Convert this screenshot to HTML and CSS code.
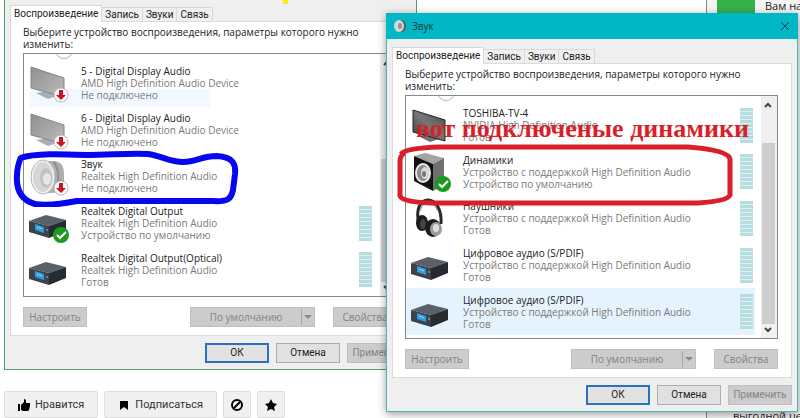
FILE: index.html
```
<!DOCTYPE html>
<html lang="ru">
<head>
    <meta charset="UTF-8">
    <meta name="viewport" content="width=device-width, initial-scale=1.0">
    <title>Звук</title>
    <link rel="stylesheet" href="styles.css">
</head>
<body>
    <!-- Иконки устройств -->
    <svg class="sprite" width="0" height="0" aria-hidden="true">
        <defs>
            <linearGradient id="screen-off" x1="0" y1="0" x2="1" y2="1">
                <stop offset="0" stop-color="#8f8f8f"/>
                <stop offset="1" stop-color="#bcbcbc"/>
            </linearGradient>
            <linearGradient id="screen-on" x1="0" y1="1" x2="1" y2="0">
                <stop offset="0" stop-color="#3c3c3c"/>
                <stop offset="0.5" stop-color="#767676"/>
                <stop offset="1" stop-color="#4c4c4c"/>
            </linearGradient>
        </defs>
        <symbol id="tv-off" viewBox="0 0 40 40">
            <path d="M7 30l13-2 8 5-9 3z" fill="#a9b0b5"/>
            <path d="M2 4l33 11v19L2 25z" fill="url(#screen-off)" stroke="#858585"/>
        </symbol>
        <symbol id="tv-on" viewBox="0 0 40 40">
            <path d="M7 31l12-2 9 5-9 3z" fill="#6b7479"/>
            <path d="M2 5l32 10v21L2 27z" fill="url(#screen-on)" stroke="#222"/>
        </symbol>
        <symbol id="horn" viewBox="0 0 40 40">
            <path d="M14 5h12q9 1 9 13v10q-2 9-12 9h-9z" fill="#aeaeae"/>
            <path d="M25 6q7 10 3 28" fill="none" stroke="#8f8f8f" stroke-width="2"/>
            <ellipse cx="14" cy="21" rx="11" ry="16" fill="#d6d6d6" stroke="#f4f4f4" stroke-width="2"/>
            <ellipse cx="14" cy="21" rx="12" ry="17" fill="none" stroke="#b3b3b3"/>
            <ellipse cx="17" cy="22" rx="6" ry="10" fill="#c2c2c2"/>
            <ellipse cx="18" cy="23" rx="4" ry="6" fill="#e6e6e6"/>
        </symbol>
        <symbol id="receiver" viewBox="0 0 40 40">
            <path d="M0 18l17-6 20 5-17 6z" fill="#596068"/>
            <path d="M0 18l20 5v12L0 29z" fill="#3b424a"/>
            <path d="M20 23l17-6v11l-17 7z" fill="#262b31"/>
            <path d="M6 21l9 3v6l-9-3z" fill="#2f9be0"/>
            <path d="M8 24l5 2" stroke="#9ad6ff"/>
            <circle cx="18" cy="27" r="1" fill="#89929b"/>
        </symbol>
        <symbol id="speaker" viewBox="0 0 40 40">
            <path d="M3 4l11-3 19 5-11 6z" fill="#a4a4a4"/>
            <path d="M22 12l11-6v27l-11 6z" fill="#6f6f6f"/>
            <path d="M3 4l19 8v27L3 29z" fill="#111"/>
            <ellipse cx="12" cy="21" rx="7" ry="9" fill="#8c8c8c" stroke="#e9e9e9" stroke-width="2"/>
            <ellipse cx="14" cy="21" rx="4" ry="6" fill="#dcdcdc"/>
            <ellipse cx="13" cy="22" rx="2" ry="3" fill="#777"/>
        </symbol>
        <symbol id="headphones" viewBox="0 0 40 40">
            <path d="M8 26C4 10 10 2 17 2s14 8 13 24" fill="none" stroke="#2a2a2a" stroke-width="3"/>
            <path d="M9 13q3-9 8-9t10 9" fill="none" stroke="#8a8a8a"/>
            <ellipse cx="11" cy="25" rx="6" ry="8" fill="#1c1c1c"/>
            <ellipse cx="12" cy="26" rx="3" ry="5" fill="#444"/>
            <ellipse cx="22" cy="30" rx="8" ry="9" fill="#1c1c1c"/>
            <ellipse cx="25" cy="31" rx="6" ry="7" fill="#9d9d9d"/>
            <ellipse cx="25" cy="30" rx="3" ry="4" fill="#dedede"/>
        </symbol>
        <symbol id="badge-off" viewBox="0 0 16 16">
            <circle cx="8" cy="8" r="7" fill="#fff" stroke="#b5b5b5"/>
            <path d="M6 3h4v5h3l-5 5-5-5h3z" fill="#cf1420"/>
        </symbol>
        <symbol id="badge-ok" viewBox="0 0 16 16">
            <circle cx="8" cy="8" r="8" fill="#1b9a22"/>
            <path d="M4 8l3 3 6-6" fill="none" stroke="#fff" stroke-width="2"/>
        </symbol>
    </svg>

    <div class="page">
        <main class="content">
            <section class="dialog dialog-old">
                <div class="dialog-body">
                    <div class="tabs">
                        <button type="button" class="tab active">Воспроизведение</button>
                        <button type="button" class="tab">Запись</button>
                        <button type="button" class="tab">Звуки</button>
                        <button type="button" class="tab">Связь</button>
                    </div>
                    <div class="panel">
                        <p class="hint">Выберите устройство воспроизведения, параметры которого нужно<br>изменить:</p>
                        <div class="list">
                            <ul class="devices">
                                <li class="device traced">
                                    <span class="icon"><svg class="pic"><use href="#tv-off"/></svg><svg class="badge"><use href="#badge-off"/></svg></span>
                                    <div class="info"><b>5 - Digital Display Audio</b><span>AMD High Definition Audio Device</span><span>Не подключено</span></div>
                                </li>
                                <li class="device">
                                    <span class="icon"><svg class="pic"><use href="#tv-off"/></svg><svg class="badge"><use href="#badge-off"/></svg></span>
                                    <div class="info"><b>6 - Digital Display Audio</b><span>AMD High Definition Audio Device</span><span>Не подключено</span></div>
                                </li>
                                <li class="device">
                                    <span class="icon"><svg class="pic"><use href="#horn"/></svg><svg class="badge"><use href="#badge-off"/></svg></span>
                                    <div class="info"><b>Звук</b><span>Realtek High Definition Audio</span><span>Не подключено</span></div>
                                </li>
                                <li class="device">
                                    <span class="icon"><svg class="pic"><use href="#receiver"/></svg><svg class="badge"><use href="#badge-ok"/></svg></span>
                                    <div class="info"><b>Realtek Digital Output</b><span>Realtek High Definition Audio</span><span>Устройство по умолчанию</span></div>
                                    <i class="meter"></i>
                                </li>
                                <li class="device">
                                    <span class="icon"><svg class="pic"><use href="#receiver"/></svg></span>
                                    <div class="info"><b>Realtek Digital Output(Optical)</b><span>Realtek High Definition Audio</span><span>Готов</span></div>
                                    <i class="meter"></i>
                                </li>
                            </ul>
                            <div class="scroll">
                                <svg viewBox="0 0 12 12"><path d="M3 8l3-3 3 3"/></svg>
                                <span class="thumb"></span>
                                <svg viewBox="0 0 12 12"><path d="M3 4l3 3 3-3"/></svg>
                            </div>
                        </div>
                        <div class="actions">
                            <button type="button" class="btn" disabled>Настроить</button>
                            <button type="button" class="btn split" disabled><span>По умолчанию</span><svg viewBox="0 0 12 12"><path d="M2 4h8l-4 4z"/></svg></button>
                            <button type="button" class="btn" disabled>Свойства</button>
                        </div>
                    </div>
                    <div class="footer">
                        <button type="button" class="btn primary">ОК</button>
                        <button type="button" class="btn">Отмена</button>
                        <button type="button" class="btn" disabled>Применить</button>
                    </div>
                </div>
                <i class="yellow-mark"></i>
                <svg class="blue-ring" viewBox="0 0 230 60">
                    <path d="M9 11C25 6 50 7 75 8c24 0 42-2 62-1 14 2 22 8 35 8 14 0 18-6 34-6 16 1 19 8 18 18l-2 16c-2 9-5 12-20 11H66c-15 3-30 5-42 3C10 53 5 42 6 28c0-8 2-13 4-18"/>
                </svg>
            </section>

            <div class="social">
                <button type="button" class="soc"><svg viewBox="0 0 12 12"><path d="M0 5h2v7H0zM3 6l3-3V0q2 0 2 2v2h4v3l-1 4-1 1H5l-2-1z"/></svg>Нравится</button>
                <button type="button" class="soc"><svg viewBox="0 0 12 12"><path d="M2 2h8v9L6 8l-4 3z"/></svg>Подписаться</button>
                <button type="button" class="soc square" aria-label="Скрыть"><svg viewBox="0 0 12 12"><path d="M3 9l6-6" stroke="#000" stroke-width="2"/><circle cx="6" cy="6" r="5" fill="none" stroke="#000" stroke-width="2"/></svg></button>
                <button type="button" class="soc square" aria-label="В избранное"><svg viewBox="0 0 12 12"><path d="M6 0l2 4 4 1-3 3 1 4-4-2-4 2 1-4-3-3 4-1z"/></svg></button>
            </div>
        </main>

        <aside class="side">
            <div class="notice"><span class="tile"></span>Вам на</div>
            <p class="ad">выгодной цен</p>
        </aside>

        <section class="dialog dialog-new">
            <header class="titlebar">
                <svg class="title-icon" viewBox="0 0 14 14"><ellipse cx="9" cy="7" rx="4" ry="6" fill="#5d5d5d"/><ellipse cx="6" cy="7" rx="5" ry="6" fill="#d4d8da"/><ellipse cx="7" cy="7" rx="2" ry="3" fill="#8b9498"/></svg>
                <h1>Звук</h1>
                <button type="button" class="close" aria-label="Закрыть"><svg viewBox="0 0 10 10"><path d="M1 1l8 8M9 1L1 9"/></svg></button>
            </header>
            <div class="dialog-body">
                <div class="tabs">
                    <button type="button" class="tab active">Воспроизведение</button>
                    <button type="button" class="tab">Запись</button>
                    <button type="button" class="tab">Звуки</button>
                    <button type="button" class="tab">Связь</button>
                </div>
                <div class="panel">
                    <p class="hint">Выберите устройство воспроизведения, параметры которого нужно<br>изменить:</p>
                    <div class="list">
                        <ul class="devices">
                            <li class="device">
                                <span class="icon"><svg class="pic"><use href="#tv-on"/></svg></span>
                                <div class="info"><b>TOSHIBA-TV-4</b><span>NVIDIA High Definition Audio</span><span>Готов</span></div>
                                <i class="meter"></i>
                            </li>
                            <li class="device">
                                <span class="icon"><svg class="pic"><use href="#speaker"/></svg><svg class="badge"><use href="#badge-ok"/></svg></span>
                                <div class="info"><b>Динамики</b><span>Устройство с поддержкой High Definition Audio</span><span>Устройство по умолчанию</span></div>
                                <i class="meter"></i>
                            </li>
                            <li class="device">
                                <span class="icon"><svg class="pic"><use href="#headphones"/></svg></span>
                                <div class="info"><b>Наушники</b><span>Устройство с поддержкой High Definition Audio</span><span>Готов</span></div>
                                <i class="meter"></i>
                            </li>
                            <li class="device">
                                <span class="icon"><svg class="pic"><use href="#receiver"/></svg></span>
                                <div class="info"><b>Цифровое аудио (S/PDIF)</b><span>Устройство с поддержкой High Definition Audio</span><span>Готов</span></div>
                                <i class="meter"></i>
                            </li>
                            <li class="device selected">
                                <span class="icon"><svg class="pic"><use href="#receiver"/></svg></span>
                                <div class="info"><b>Цифровое аудио (S/PDIF)</b><span>Устройство с поддержкой High Definition Audio</span><span>Готов</span></div>
                                <i class="meter"></i>
                            </li>
                        </ul>
                        <div class="scroll">
                            <svg viewBox="0 0 12 12"><path d="M3 8l3-3 3 3"/></svg>
                            <span class="thumb"></span>
                            <svg viewBox="0 0 12 12"><path d="M3 4l3 3 3-3"/></svg>
                        </div>
                    </div>
                    <div class="actions">
                        <button type="button" class="btn" disabled>Настроить</button>
                        <button type="button" class="btn split" disabled><span>По умолчанию</span><svg viewBox="0 0 12 12"><path d="M2 4h8l-4 4z"/></svg></button>
                        <button type="button" class="btn" disabled>Свойства</button>
                    </div>
                </div>
                <div class="footer">
                    <button type="button" class="btn primary">ОК</button>
                    <button type="button" class="btn">Отмена</button>
                    <button type="button" class="btn" disabled>Применить</button>
                </div>
            </div>
            <p class="red-note">вот подключеные динамики</p>
            <svg class="red-ring" viewBox="0 0 340 66">
                <path d="M6 13Q10 7 45 6h248q40 3 42 12v36q-2 6-32 8H45Q8 62 5 55V20q0-5 4-8"/>
            </svg>
        </section>
    </div>
</body>
</html>
```
FILE: styles.css
```
* {
    box-sizing: border-box;
}
body {
    margin: 0;
    background-color: #fff;
    font-family: "Open Sans", "Noto Sans", sans-serif;
    font-size: 10px;
    line-height: 12px;
    color: #222;
}
button {
    font: inherit;
    color: inherit;
    padding: 0;
}
.sprite {
    position: absolute;
}
.page {
    position: relative;
    display: grid;
    grid-template-columns: 1fr 94px;
    height: 100vh;
    overflow: hidden;
}
.content {
    min-width: 0;
    padding-left: 4px;
}

/* Окна */
.dialog {
    background-color: #efefef;
    border: 1px solid #4f9f68;
}
.dialog-old {
    position: relative;
    width: 52%;
    min-width: 413px;
    border-top: none;
}
.content .dialog-old {
    width: 413px;
}
.dialog-new {
    position: absolute;
    top: 13px;
    left: 386px;
    right: 2px;
    border: 1px solid #4fb5b5;
    border-top: none;
    box-shadow: 0 2px 8px rgba(0, 0, 0, 0.4);
}
.titlebar {
    display: flex;
    align-items: center;
    height: 26px;
    padding: 0 8px 0 7px;
    gap: 5px;
    margin: 0 -1px;
    background-color: #00b7c5;
}
.titlebar h1 {
    flex: 1;
    margin: 0;
    font-size: 10px;
    font-weight: normal;
    color: #16393d;
}
.title-icon {
    width: 14px;
    height: 14px;
}
.close {
    width: 10px;
    height: 10px;
    border: none;
    background: none;
}
.close svg {
    display: block;
    fill: none;
    stroke: #123f44;
}
.dialog-body {
    padding: 8px 5px 6px;
}
.dialog-old .dialog-body {
    padding-top: 5px;
}

/* Вкладки */
.tabs {
    display: flex;
    align-items: flex-end;
}
.tab {
    height: 14px;
    padding: 0 3px;
    border: 1px solid #d9d9d9;
    border-left: none;
    border-bottom: none;
    background-color: #f0f0f0;
    font-family: Roboto, sans-serif;
}
.tab.active {
    height: 17px;
    margin-bottom: -1px;
    border-left: 1px solid #d9d9d9;
    background-color: #fff;
    position: relative;
}
.panel {
    padding: 4px 13px 8px 12px;
    border: 1px solid #dcdcdc;
    background-color: #fff;
}
.hint {
    margin: 0 0 3px;
}

/* Список устройств */
.list {
    position: relative;
    display: flex;
    height: 244px;
    border: 1px solid #828790;
}
.list::before {
    content: "";
    position: absolute;
    top: -13px;
    left: 31px;
    width: 16px;
    height: 16px;
    border: 1px solid #b5b5b5;
    border-radius: 50%;
    clip-path: inset(13px 0 0 0);
}
.devices {
    flex: 1;
    display: flex;
    flex-direction: column;
    margin: 0;
    padding: 6px 6px 3px 0;
    list-style: none;
}
.device {
    position: relative;
    flex: 1;
    display: flex;
    align-items: center;
    gap: 12px;
    padding: 0 2px 0 5px;
}
.device.selected {
    background-color: #e5f3ff;
}
.device.traced::before {
    content: "";
    position: absolute;
    left: 6px;
    bottom: 0;
    width: 180px;
    height: 18px;
    background-color: #f2f8ff;
}
.icon {
    position: relative;
    width: 40px;
    height: 40px;
}
.pic {
    display: block;
    width: 40px;
    height: 40px;
}
.badge {
    position: absolute;
    right: 0;
    bottom: 0;
    width: 16px;
    height: 16px;
}
.info {
    position: relative;
    flex: 1;
    display: flex;
    flex-direction: column;
    color: #7a7a7a;
    white-space: nowrap;
}
.info b {
    font-weight: normal;
    color: #222;
}
.meter {
    width: 13px;
    height: 35px;
    background: repeating-linear-gradient(#b5dcdf 0 3px, #dceff0 3px 4px);
}
.scroll {
    display: flex;
    flex-direction: column;
    width: 16px;
    padding: 3px 2px 2px 1px;
    background-color: #f0f0f0;
}
.scroll svg {
    width: 12px;
    height: 12px;
    fill: none;
    stroke: #444;
    stroke-width: 2;
}
.thumb {
    flex: 1;
    margin-top: 32px;
    background-color: #cdcdcd;
}
.dialog-old .thumb {
    margin-top: 90px;
}

/* Кнопки */
.actions {
    display: flex;
    gap: 18px;
    margin-top: 10px;
}
.btn {
    width: 64px;
    height: 20px;
    border: 1px solid #adadad;
    background-color: #e1e1e1;
}
.btn:disabled {
    border-color: #bfbfbf;
    background-color: #cccccc;
    color: #838383;
}
.btn.primary {
    border: 2px solid #2a72bd;
}
.btn.split {
    display: flex;
    align-items: center;
    width: 125px;
    margin-left: auto;
}
.split span {
    flex: 1;
}
.split svg {
    width: 13px;
    height: 16px;
    border-left: 1px solid #a5a5a5;
    fill: #8a8a8a;
}
.footer {
    display: flex;
    justify-content: flex-end;
    gap: 7px;
    margin-top: 7px;
    font-family: Roboto, sans-serif;
}

/* Панель под записью */
.social {
    display: flex;
    gap: 6px;
    margin-top: 21px;
}
.soc {
    display: flex;
    align-items: center;
    gap: 5px;
    height: 27px;
    padding: 0 13px;
    border: 1px solid #dedede;
    border-radius: 2px;
    background-color: #f0f0f0;
    font-family: Roboto, sans-serif;
    font-size: 11px;
    color: #333;
}
.soc svg {
    width: 12px;
    height: 12px;
    fill: #000;
}
.soc.square {
    padding: 0 7px;
}

/* Правая колонка */
.side {
    display: flex;
    flex-direction: column;
    justify-content: space-between;
    border-left: 1px solid #8d8d8d;
    background-color: #f4f4f4;
    overflow: hidden;
}
.notice {
    display: flex;
    gap: 10px;
    padding-left: 10px;
    font-size: 11px;
    white-space: nowrap;
}
.tile {
    flex: none;
    width: 38px;
    height: 13px;
    background-color: #36b04a;
}
.ad {
    margin: 0 0 -4px 26px;
    font-size: 11px;
    white-space: nowrap;
}

/* Пометки поверх окон */
.yellow-mark {
    position: absolute;
    top: 0;
    left: 278px;
    width: 5px;
    height: 4px;
    background-color: #f5ee1c;
}
.blue-ring {
    position: absolute;
    top: 147px;
    left: 6px;
    width: 230px;
    height: 60px;
    fill: none;
    stroke: #0707ee;
    stroke-width: 6;
}
.red-note {
    position: absolute;
    top: 102px;
    left: 29px;
    margin: 0;
    font-family: "Liberation Serif", serif;
    font-size: 26px;
    font-weight: bold;
    line-height: 28px;
    white-space: nowrap;
    color: #d91f2a;
}
.red-ring {
    position: absolute;
    top: 128px;
    left: 8px;
    width: 340px;
    height: 66px;
    fill: none;
    stroke: #d91f2a;
    stroke-width: 5;
}
```
